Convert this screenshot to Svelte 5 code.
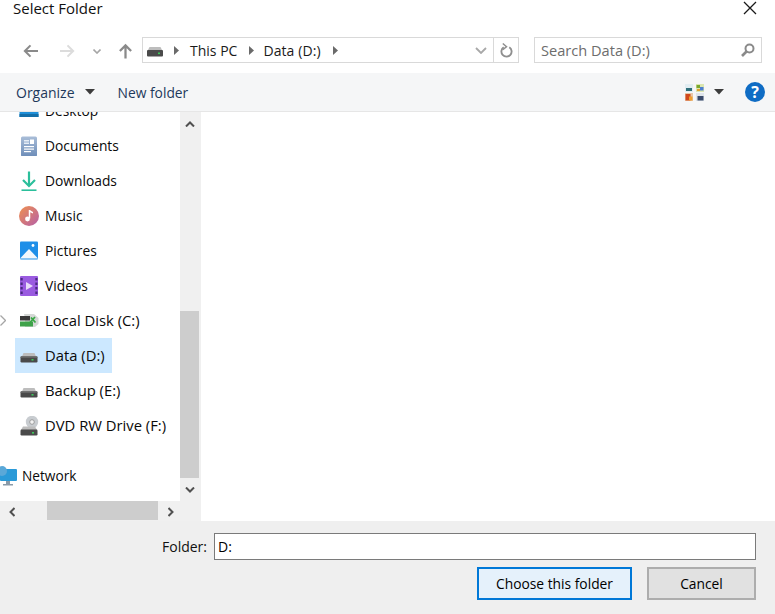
<script>
  const places = [
    { id: 'documents', label: 'Documents' },
    { id: 'downloads', label: 'Downloads' },
    { id: 'music', label: 'Music' },
    { id: 'pictures', label: 'Pictures' },
    { id: 'videos', label: 'Videos' },
    { id: 'c', label: 'Local Disk (C:)', expander: true, isDrive: true },
    { id: 'd', label: 'Data (D:)', selected: true, isDrive: true },
    { id: 'e', label: 'Backup (E:)', isDrive: true },
    { id: 'f', label: 'DVD RW Drive (F:)', isDrive: true }
  ];
</script>

{#snippet drive()}
  <svg class="icon" viewBox="0 0 20 20">
    <path d="M3 10.5 L4.5 7 H15.5 L17 10.5Z" fill="#bdbdbd"/>
    <rect x="1.5" y="10" width="17" height="6.5" rx="1.2" fill="#4a4a4a"/>
    <rect x="2" y="10.4" width="16" height="1" fill="#8c8c8c"/>
    <rect x="12.5" y="13" width="2" height="1.6" fill="#3cc85a"/>
  </svg>
{/snippet}

{#snippet placeIcon(id)}
  {#if id === 'documents'}
    <svg class="icon" viewBox="0 0 20 20">
      <defs><linearGradient id="doc" x1="0" y1="0" x2="0" y2="1"><stop offset="0" stop-color="#a9bdd8"/><stop offset="1" stop-color="#6d8db8"/></linearGradient></defs>
      <rect x="2" y="0.5" width="16" height="20" rx="1.5" fill="url(#doc)"/>
      <rect x="5" y="4" width="5" height="1.5" fill="#e6edf6"/><rect x="5" y="6.5" width="5" height="1.5" fill="#e6edf6"/>
      <rect x="11" y="3.5" width="4" height="4.5" fill="#fff"/>
      <rect x="5" y="10" width="10" height="1.2" fill="#fff"/><rect x="5" y="12.5" width="10" height="1.2" fill="#fff"/><rect x="5" y="15" width="7" height="1.2" fill="#fff"/>
    </svg>
  {:else if id === 'downloads'}
    <svg class="icon" viewBox="0 0 20 20" fill="none" stroke="#2bbf9b" stroke-width="2.2">
      <path d="M10 0.5 V15"/><path d="M4 9 L10 15 L16 9"/><path d="M2.5 19.5 H17.5"/>
    </svg>
  {:else if id === 'music'}
    <svg class="icon" viewBox="0 0 20 20">
      <defs><linearGradient id="mus" x1="0" y1="0" x2="1" y2="1"><stop offset="0" stop-color="#f0914e"/><stop offset="1" stop-color="#b55fa8"/></linearGradient></defs>
      <circle cx="10" cy="10" r="10" fill="url(#mus)"/>
      <path d="M10.5 4 V12.5" stroke="#fff" stroke-width="1.5"/><path d="M10.5 4 L14 6 V7.5 L10.5 6Z" fill="#fff"/><circle cx="8.5" cy="13" r="2.4" fill="#fff"/>
    </svg>
  {:else if id === 'pictures'}
    <svg class="icon" viewBox="0 0 20 20">
      <rect x="1" y="0.5" width="18" height="18" rx="1" fill="#1f8fe8"/>
      <circle cx="14" cy="4.5" r="1.4" fill="#fff"/>
      <path d="M1 17.5 L10 8 L19 17.5Z" fill="#f2f7fc"/>
    </svg>
  {:else if id === 'videos'}
    <svg class="icon" viewBox="0 0 20 20">
      <rect x="1" y="0" width="18" height="20" rx="1" fill="#9a5be0"/>
      <rect x="1.5" y="2" width="2.2" height="2.5" fill="#4a2a80"/><rect x="1.5" y="6.5" width="2.2" height="2.5" fill="#4a2a80"/><rect x="1.5" y="11" width="2.2" height="2.5" fill="#4a2a80"/><rect x="1.5" y="15.5" width="2.2" height="2.5" fill="#4a2a80"/>
      <rect x="16.3" y="2" width="2.2" height="2.5" fill="#4a2a80"/><rect x="16.3" y="6.5" width="2.2" height="2.5" fill="#4a2a80"/><rect x="16.3" y="11" width="2.2" height="2.5" fill="#4a2a80"/><rect x="16.3" y="15.5" width="2.2" height="2.5" fill="#4a2a80"/>
      <path d="M7 6 L14 10 L7 14Z" fill="#e8dcf8"/>
    </svg>
  {:else if id === 'c'}
    <svg class="icon" viewBox="0 0 20 20">
      <path d="M5 3 H15 L19.5 7 V13 L16 16 H6 V7Z" fill="#d5d8d6"/>
      <rect x="1" y="5" width="10" height="4.5" fill="#3a3a3a"/>
      <rect x="1" y="10.5" width="13" height="5" fill="#3fa24a"/>
      <path d="M10.5 12 L16 6 M12 6.5 L16.5 11.5" stroke="#38a844" stroke-width="1.8"/>
    </svg>
  {:else if id === 'f'}
    <svg class="icon" viewBox="0 0 20 20">
      <circle cx="13" cy="6" r="6.2" fill="#c8ccd0"/><circle cx="13" cy="6" r="2.3" fill="#f2f2f2" stroke="#8e8e8e" stroke-width=".8"/>
      <path d="M2 14 L4 10.5 H16 L18 14Z" fill="#bdbdbd"/>
      <rect x="1.5" y="13.5" width="17" height="6" rx="1.2" fill="#4a4a4a"/>
      <rect x="13" y="16" width="2" height="1.6" fill="#3cc85a"/>
    </svg>
  {:else}
    {@render drive()}
  {/if}
{/snippet}

{#snippet caret(cls)}
  <svg class={cls} viewBox="0 0 10 6"><path d="M0 0 H10 L5 5.5Z" fill="#3c3c3c"/></svg>
{/snippet}

{#snippet crumb()}
  <svg class="crumb" viewBox="0 0 5 9"><path d="M0 0 L5 4.5 L0 9Z" fill="#6a6a6a"/></svg>
{/snippet}

<div class="dialog">
  <header class="title">
    <span>Select Folder</span>
    <svg class="close" viewBox="0 0 14 14"><path d="M1 1 L13 13 M13 1 L1 13" stroke="#1a1a1a" stroke-width="1.3" fill="none"/></svg>
  </header>

  <div class="nav">
    <svg class="arrow back" viewBox="0 0 16 14" fill="none" stroke="#8a8a8a" stroke-width="2.2"><path d="M16 7 H2 M8 1 L2 7 L8 13"/></svg>
    <svg class="arrow forward" viewBox="0 0 16 14" fill="none" stroke="#dcdcdc" stroke-width="2.2"><path d="M0 7 H14 M8 1 L14 7 L8 13"/></svg>
    <svg class="recent" viewBox="0 0 8 5" fill="none" stroke="#a6a6a6" stroke-width="1.6"><path d="M.5 .5 L4 4 L7.5 .5"/></svg>
    <svg class="arrow up" viewBox="0 0 16 16" fill="none" stroke="#8a8a8a" stroke-width="2.4"><path d="M8 16 V2 M2 8 L8 2 L14 8"/></svg>
    <div class="address">
      <svg class="addr-drive" viewBox="0 0 18 11">
        <path d="M2 4 L3.5 1 H14.5 L16 4Z" fill="#bdbdbd"/>
        <rect x="1" y="4" width="16" height="6.5" rx="1" fill="#4a4a4a"/>
        <rect x="12" y="6.5" width="2" height="1.6" fill="#3cc85a"/>
      </svg>
      {@render crumb()}
      <span class="crumb-text first">This PC</span>
      {@render crumb()}
      <span class="crumb-text second">Data (D:)</span>
      {@render crumb()}
      <span class="spacer"></span>
      <svg class="addr-down" viewBox="0 0 12 7" fill="none" stroke="#a8a8a8" stroke-width="1.8"><path d="M1 1 L6 6 L11 1"/></svg>
      <span class="addr-refresh">
        <svg viewBox="0 0 14 16" fill="none" stroke="#8f8f8f" stroke-width="2"><path d="M4 4.5 A5.5 5.5 0 1 0 10 4.5"/><path d="M3 0.5 L7 4 L3 7" stroke-width="1.6"/></svg>
      </span>
    </div>
    <div class="search">
      <span>Search Data (D:)</span>
      <svg viewBox="0 0 14 14" fill="none" stroke="#8a8a8a"><circle cx="8.5" cy="5.5" r="4" stroke-width="2"/><path d="M5.5 8.5 L1 13" stroke-width="2.6"/></svg>
    </div>
  </div>

  <div class="toolbar">
    <span class="tool">Organize</span>
    {@render caret('org-caret')}
    <span class="tool new">New folder</span>
    <span class="spacer"></span>
    <svg class="views" viewBox="0 0 19 17">
      <rect x="0" y="0" width="8" height="8" fill="#e2edf2"/><rect x="1" y="4" width="6" height="3" fill="#2f6f7a"/>
      <rect x="11" y="0" width="8" height="8" fill="#dbe6b0"/><rect x="11.5" y="1" width="3.5" height="3" fill="#7aa82e"/><rect x="15" y="3" width="3.5" height="3.5" fill="#4c7fd0"/><rect x="12" y="5" width="3" height="2" fill="#e0a030"/>
      <rect x="0" y="9" width="8" height="8" fill="#e8c8a8"/><rect x="0.5" y="10" width="5" height="6.5" fill="#d0481c"/><rect x="4" y="12.5" width="3.5" height="4" fill="#f0a030"/>
      <rect x="11" y="9" width="8" height="8" fill="#dfe4ea"/><rect x="12.5" y="12" width="6" height="4.5" fill="#3a4a6a"/>
    </svg>
    {@render caret('view-caret')}
    <span class="help">?</span>
  </div>

  <div class="body">
    <aside class="side">
      <div class="tree-wrap">
        <div class="tree">
          <div class="row clipped">
            <svg class="icon" viewBox="0 0 20 20"><rect x="0.5" y="2" width="19" height="14" fill="#1f8fd8"/><rect x="0.5" y="13" width="19" height="3" fill="#146ea8"/></svg>
            <span>Desktop</span>
          </div>
          {#each places as p}
            <div class="row" class:selected={p.selected} class:driveRow={p.isDrive}>
              {#if p.expander}
                <svg class="expander" viewBox="0 0 6 11" fill="none" stroke="#a6a6a6" stroke-width="1.3"><path d="M.5 .5 L5.5 5.5 L.5 10.5"/></svg>
              {/if}
              {@render placeIcon(p.id)}
              <span>{p.label}</span>
            </div>
          {/each}
          <div class="row network">
            <svg class="icon" viewBox="0 0 20 20">
              <rect x="3" y="3" width="17" height="12" rx="1" fill="#2a9ad8"/>
              <rect x="9" y="15" width="4" height="3" fill="#8a9aa8"/><rect x="6" y="18" width="10" height="1.5" fill="#8a9aa8"/>
              <circle cx="5" cy="5" r="5" fill="#5aa8d8"/>
            </svg>
            <span>Network</span>
          </div>
        </div>
        <div class="vscroll">
          <svg class="sb-btn" viewBox="0 0 10 6" fill="none" stroke="#505050" stroke-width="2"><path d="M1 5.5 L5 1.5 L9 5.5"/></svg>
          <div class="vtrack"><div class="vthumb"></div></div>
          <svg class="sb-btn" viewBox="0 0 10 6" fill="none" stroke="#505050" stroke-width="2"><path d="M1 .5 L5 4.5 L9 .5"/></svg>
        </div>
      </div>
      <div class="hscroll">
        <svg class="hb-btn" viewBox="0 0 6 10" fill="none" stroke="#505050" stroke-width="2"><path d="M5.5 1 L1.5 5 L5.5 9"/></svg>
        <div class="hthumb"></div>
        <svg class="hb-btn" viewBox="0 0 6 10" fill="none" stroke="#505050" stroke-width="2"><path d="M.5 1 L4.5 5 L.5 9"/></svg>
      </div>
    </aside>
    <main class="files"></main>
  </div>

  <footer class="footer">
    <div class="folder-row">
      <label for="folder">Folder:</label>
      <input id="folder" value="D:" />
    </div>
    <div class="buttons">
      <button class="primary">Choose this folder</button>
      <button class="secondary">Cancel</button>
    </div>
  </footer>
</div>

<style>
  :global(body) { margin: 0; background: #fff; }
  .dialog {
    width: 775px; height: 614px; display: flex; flex-direction: column; overflow: hidden;
    font-family: "Open Sans", "Noto Sans", sans-serif; font-size: 14px; color: #000; background: #fff;
  }
  .spacer { flex: 1; }
  .title { height: 37px; flex: none; box-sizing: border-box; padding: 0 18px 0 13px; display: flex; justify-content: space-between; align-items: flex-start; }
  .title span { font-size: 15px; line-height: 16px; color: #111; }
  .close { width: 14px; height: 14px; margin-top: 1px; }

  .nav { height: 36px; flex: none; display: flex; align-items: flex-start; padding-left: 23px; }
  .arrow { flex: none; width: 15px; height: 14px; margin-top: 7px; }
  .forward { margin-left: 22px; }
  .recent { flex: none; width: 8px; height: 5px; margin: 12px 0 0 18px; }
  .up { height: 16px; margin: 6px 9px 0 17px; }
  .address, .search { height: 26px; box-sizing: border-box; border: 1px solid #d9d9d9; display: flex; align-items: center; }
  .address { width: 377px; flex: none; }
  .addr-drive { width: 18px; height: 11px; margin: 3px 10px 0 3px; flex: none; }
  .crumb { width: 5px; height: 9px; flex: none; }
  .crumb-text { font-size: 14px; color: #1a1a1a; }
  .crumb-text.first { margin: 0 12px 0 11px; }
  .crumb-text.second { margin: 0 12px 0 9px; letter-spacing: .1px; }
  .addr-down { width: 12px; height: 7px; margin-right: 6px; }
  .addr-refresh { width: 25px; height: 100%; box-sizing: border-box; border-left: 1px solid #d9d9d9; display: flex; align-items: center; justify-content: center; }
  .addr-refresh svg { width: 13px; height: 15px; }
  .search { width: 228px; flex: none; margin-left: 15px; padding: 0 6px; justify-content: space-between; color: #6d6d6d; }
  .search span { font-size: 14.6px; }
  .search svg { width: 14px; height: 14px; }

  .toolbar { height: 39px; box-sizing: border-box; flex: none; background: #f5f6f7; border-bottom: 1px solid #e6e6e6; display: flex; align-items: center; padding: 0 10px 0 16px; }
  .tool { color: #1e395b; font-size: 14px; }
  .org-caret { width: 10px; height: 6px; margin-left: 10px; }
  .tool.new { margin-left: 23px; font-size: 13.8px; }
  .views { width: 19px; height: 17px; }
  .view-caret { width: 10px; height: 6px; margin: 0 21px 0 10px; }
  .help { width: 20px; height: 20px; border-radius: 50%; background: #0f6cc4; color: #fff; text-align: center; font: bold 16px/20px "Open Sans", sans-serif; }

  .body { flex: 1; min-height: 0; display: flex; }
  .side { width: 201px; flex: none; display: flex; flex-direction: column; background: #f0f0f0; }
  .tree-wrap { flex: 1; min-height: 0; display: flex; }
  .tree { width: 180px; flex: none; background: #fff; overflow: hidden; }
  .row { height: 35px; position: relative; display: flex; align-items: center; gap: 5px; margin-left: 15px; padding-left: 4px; box-sizing: border-box; width: fit-content; padding-right: 5px; white-space: nowrap; color: #0a0a0a; font-size: 13.8px; }
  .row span { margin-left: 1px; }
  .row.driveRow { font-size: 14.8px; }
  .row.driveRow span { margin-bottom: 2px; }
  .row.clipped { margin-top: -19px; }
  .row.selected { background: #cce8ff; width: 97px; }
  .row.network { margin: 15px 0 0 -3px; padding-left: 0; }
  .row.network span { margin-left: 0; font-size: 13.7px; }
  .icon { width: 20px; height: 20px; flex: none; }
  .expander { position: absolute; left: -15px; top: 12px; width: 6px; height: 11px; }

  .vscroll { width: 19px; flex: none; display: flex; flex-direction: column; align-items: center; }
  .sb-btn { width: 10px; height: 6px; margin: 9px 0 8px; flex: none; }
  .vtrack { flex: 1; width: 100%; padding-top: 176px; box-sizing: border-box; }
  .vthumb { height: 167px; background: #cdcdcd; }
  .hscroll { height: 20px; flex: none; display: flex; align-items: center; padding-right: 21px; box-sizing: border-box; }
  .hb-btn { width: 6px; height: 10px; margin: 2px 0 0 9px; flex: none; }
  .hthumb { width: 111px; height: 19px; flex: none; background: #cdcdcd; margin: 0 1px 0 32px; align-self: flex-start; }

  .files { flex: 1; background: #fff; }

  .footer { height: 93px; flex: none; box-sizing: border-box; background: #efefef; padding: 12px 19px 0 0; display: flex; flex-direction: column; }
  .folder-row { display: flex; justify-content: flex-end; align-items: center; height: 27px; }
  .folder-row label { margin-right: 7px; color: #111; }
  input { width: 542px; height: 27px; box-sizing: border-box; border: 1.5px solid #7a7a7a; background: #fff; padding: 0 3px; font: inherit; color: #000; outline: none; }
  .buttons { display: flex; justify-content: flex-end; margin-top: 7px; gap: 15px; }
  button { height: 33px; font: inherit; font-size: 13.8px; color: #000; box-sizing: border-box; padding: 0; }
  .primary { width: 155px; background: #e5f1fb; border: 2px solid #0078d7; }
  .secondary { width: 109px; background: #e1e1e1; border: 2px solid #adadad; }
</style>
